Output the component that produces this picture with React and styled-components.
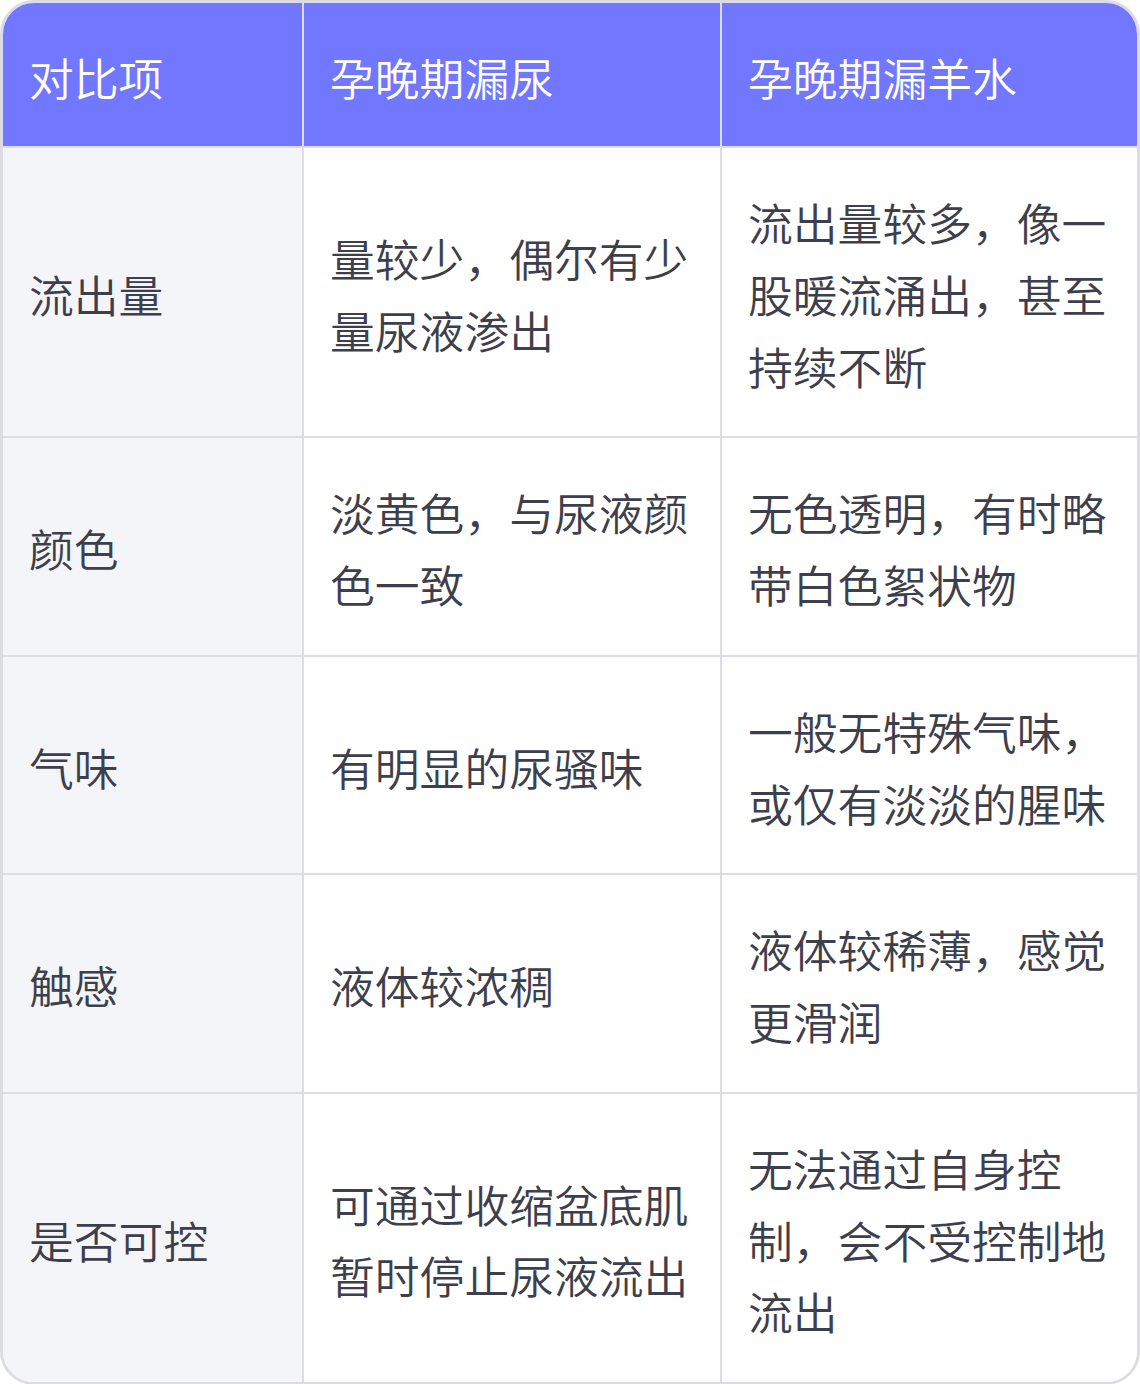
import React from "react";
import styled, { createGlobalStyle } from "styled-components";

const Global = createGlobalStyle`
  html, body { margin: 0; padding: 0; background: #ffffff; }
  body { font-family: "Noto Sans CJK SC", "Noto Sans", sans-serif; }
`;

const Wrapper = styled.div`
  width: 1140px;
  box-sizing: border-box;
  border: 3px solid #dcdce2;
  border-radius: 34px;
  overflow: hidden;
  background: #ffffff;
`;

const Table = styled.table`
  width: 100%;
  border-collapse: separate;
  border-spacing: 0;
  table-layout: fixed;
  font-family: "Noto Sans CJK SC DemiLight", "Noto Sans CJK SC Light", "Noto Sans CJK SC", "Noto Sans", sans-serif;
  font-weight: 300;
  font-size: 44.8px;
  line-height: 1.6;
`;

const Cell = styled.td`
  box-sizing: content-box;
  padding: ${(p) => (p.$head ? "37.5px 30px 34px 26px" : "38px 30px 35.2px 26px")};
  vertical-align: middle;
  text-align: left;
  color: ${(p) => (p.$head ? "#ffffff" : "#3d404c")};
  background: ${(p) => (p.$head ? "#7177ff" : p.$label ? "#f4f5f9" : "#ffffff")};
  border-right: ${(p) => (p.$last ? "none" : "2px solid #dcdce2")};
  border-bottom: ${(p) => (p.$bottom ? "none" : "2px solid #dcdce2")};
  font-weight: 300;
`;

const headers = ["对比项", "孕晚期漏尿", "孕晚期漏羊水"];
const rows = [
  ["流出量", "量较少，偶尔有少量尿液渗出", "流出量较多，像一股暖流涌出，甚至持续不断"],
  ["颜色", "淡黄色，与尿液颜色一致", "无色透明，有时略带白色絮状物"],
  ["气味", "有明显的尿骚味", "一般无特殊气味，或仅有淡淡的腥味"],
  ["触感", "液体较浓稠", "液体较稀薄，感觉更滑润"],
  ["是否可控", "可通过收缩盆底肌暂时停止尿液流出", "无法通过自身控制，会不受控制地流出"],
];

export default function App() {
  return (
    <>
      <Global />
      <Wrapper>
        <Table>
          <colgroup>
            <col style={{ width: "301px" }} />
            <col style={{ width: "418px" }} />
            <col />
          </colgroup>
          <thead>
            <tr>
              {headers.map((h, i) => (
                <Cell as="th" key={h} $head $last={i === 2}>
                  {h}
                </Cell>
              ))}
            </tr>
          </thead>
          <tbody>
            {rows.map((r, ri) => (
              <tr key={r[0]}>
                {r.map((c, ci) => (
                  <Cell
                    key={ci}
                    $label={ci === 0}
                    $last={ci === 2}
                    $bottom={ri === rows.length - 1}
                  >
                    {c}
                  </Cell>
                ))}
              </tr>
            ))}
          </tbody>
        </Table>
      </Wrapper>
    </>
  );
}
